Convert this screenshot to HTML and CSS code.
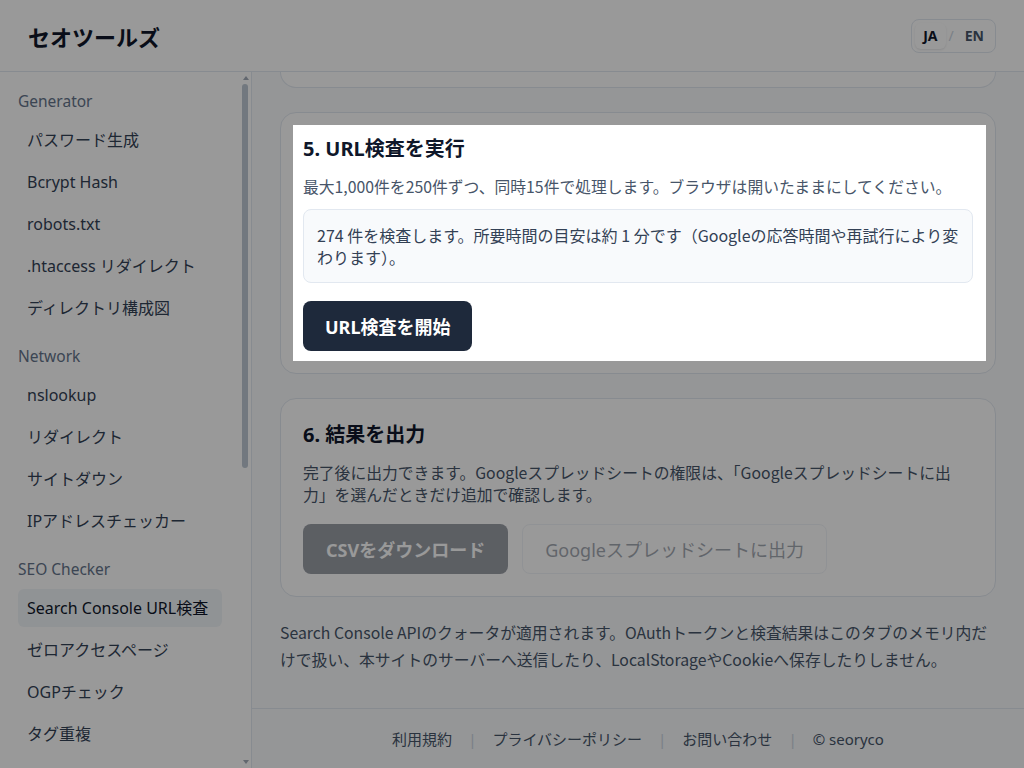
FILE: index.html
```html
<!DOCTYPE html>
<html lang="ja">
<head>
  <meta charset="utf-8" />
  <meta name="viewport" content="width=device-width, initial-scale=1" />
  <title>Search Console URL検査 | セオツールズ</title>
  <link rel="stylesheet" href="styles.css">
</head>
<body>

  <header class="topbar">
    <div class="brand">セオツールズ</div>
    <div class="lang">
      <span class="lang-item active">JA</span>
      <span class="lang-sep">/</span>
      <span class="lang-item">EN</span>
    </div>
  </header>

  <!-- Sidebar -->
  <aside class="sidebar">
    <nav class="sidebar-inner">
      <div class="group">
        <div class="group-label">Generator</div>
        <ul class="nav">
          <li><a href="#">パスワード生成</a></li>
          <li><a href="#">Bcrypt Hash</a></li>
          <li><a href="#">robots.txt</a></li>
          <li><a href="#">.htaccess リダイレクト</a></li>
          <li><a href="#">ディレクトリ構成図</a></li>
        </ul>
      </div>
      <div class="group">
        <div class="group-label">Network</div>
        <ul class="nav">
          <li><a href="#">nslookup</a></li>
          <li><a href="#">リダイレクト</a></li>
          <li><a href="#">サイトダウン</a></li>
          <li><a href="#">IPアドレスチェッカー</a></li>
        </ul>
      </div>
      <div class="group">
        <div class="group-label">SEO Checker</div>
        <ul class="nav">
          <li><a href="#" class="active">Search Console URL検査</a></li>
          <li><a href="#">ゼロアクセスページ</a></li>
          <li><a href="#">OGPチェック</a></li>
          <li><a href="#">タグ重複</a></li>
        </ul>
      </div>
    </nav>
    <!-- スクロールバー -->
    <div class="scrollbar">
      <span class="sb-arrow up"></span>
      <span class="sb-thumb"></span>
      <span class="sb-arrow down"></span>
    </div>
  </aside>

  <main class="main">
    <div class="content">
      <!-- 4. (スクロール済み) -->
      <section class="card card-stub"></section>

      <!-- 5. URL検査 -->
      <section class="card">
        <div class="tour-spot">
          <h2>5. URL検査を実行</h2>
          <p class="desc">最大1,000件を250件ずつ、同時15件で処理します。ブラウザは開いたままにしてください。</p>
          <div class="info">274 件を検査します。所要時間の目安は約 1 分です（Googleの応答時間や再試行により変わります）。</div>
          <button class="btn btn-dark btn-start">URL検査を開始</button>
        </div>
      </section>

      <!-- 6. 結果 -->
      <section class="card">
        <h2>6. 結果を出力</h2>
        <p class="desc">完了後に出力できます。Googleスプレッドシートの権限は、「Googleスプレッドシートに出力」を選んだときだけ追加で確認します。</p>
        <div class="actions">
          <button class="btn btn-dark" disabled>CSVをダウンロード</button>
          <button class="btn btn-outline" disabled>Googleスプレッドシートに出力</button>
        </div>
      </section>

      <p class="note">Search Console APIのクォータが適用されます。OAuthトークンと検査結果はこのタブのメモリ内だけで扱い、本サイトのサーバーへ送信したり、LocalStorageやCookieへ保存したりしません。</p>
    </div>

    <footer class="footer">
      <a href="#">利用規約</a><span class="sep">|</span>
      <a href="#">プライバシーポリシー</a><span class="sep">|</span>
      <a href="#">お問い合わせ</a><span class="sep">|</span>
      <span>© seoryco</span>
    </footer>
  </main>

</body>
</html>
```

FILE: styles.css
```css
html, body { height: 100%; }
body {
    margin: 0;
    font-family: "Noto Sans", "Noto Sans CJK JP", sans-serif;
    color: #0f172a;
    background: #fff;
    overflow: hidden;
    display: grid;
    grid-template-columns: 252px 1fr;
    grid-template-rows: 72px 1fr;
}
a { text-decoration: none; color: inherit; }

/* --- header --- */
.topbar {
    grid-column: 1 / -1;
    display: flex;
    align-items: center;
    justify-content: space-between;
    padding: 0 28px;
    border-bottom: 1px solid #e2e8f0;
    background: #fff;
}
.brand { font-size: 22px; font-weight: 700; color: #0f172a; }
.lang {
    display: flex; align-items: center; gap: 3px;
    border: 1px solid #e2e8f0; border-radius: 8px;
    padding: 3px; font-size: 14px; font-weight: 700;
}
.lang-item { padding: 0 8px; line-height: 26px; border-radius: 6px; color: #475569; }
.lang-item.active { background: #fff; color: #0f172a; box-shadow: 0 1px 2px rgba(15, 23, 42, .1); }
.lang-sep { color: #cbd5e1; font-weight: 400; }

/* --- sidebar --- */
.sidebar {
    position: relative;
    border-right: 1px solid #e2e8f0;
    overflow: hidden;
    min-height: 0;
}
.sidebar-inner { padding: 17px 29px 17px 18px; }
.scrollbar {
    position: absolute; top: 0; right: 0; bottom: 0;
    width: 11px;
    display: flex; flex-direction: column; align-items: center;
}
.sb-arrow { width: 0; height: 0; border-left: 3.5px solid transparent; border-right: 3.5px solid transparent; margin: 4px 0; }
.sb-arrow.up { border-bottom: 4px solid #a3acb9; }
.sb-arrow.down { border-top: 4px solid #a3acb9; margin-top: auto; }
.sb-thumb { width: 6px; height: 384px; margin: 0 0 0 -1px; border-radius: 3px; background: #bfc8d4; }

.group + .group { margin-top: 17px; }
.group-label { font-size: 15.5px; line-height: 24px; color: #64748b; margin-bottom: 8px; }
.nav { list-style: none; margin: 0; padding: 0; display: flex; flex-direction: column; gap: 4px; }
.nav a {
    display: block; height: 38px; line-height: 38px;
    padding: 0 9px; border-radius: 6px;
    font-size: 16px; color: #334155; white-space: nowrap;
}
.nav a.active { background: #f1f5f9; color: #0f172a; }

/* --- main --- */
.main {
    background: #f8fafc;
    display: flex; flex-direction: column;
    min-height: 0;
}
.content { padding: 0 28px; display: flex; flex-direction: column; gap: 24px; }
.card {
    background: #fff;
    border: 1px solid #e2e8f0;
    border-radius: 16px;
    padding: 22px;
}
.card-stub { height: 15px; padding: 0; border-top: none; border-radius: 0 0 16px 16px; }
.card h2 { margin: 0 0 13px; font-size: 20px; line-height: 28px; font-weight: 700; color: #0f172a; }
.desc, .info, .note { font-family: "Noto Sans CJK JP", "Noto Sans", sans-serif; font-size: 15.8px; }
.desc { margin: 0; line-height: 22px; color: #475569; }
.info {
    margin-top: 11px; font-size: 16px;
    background: #f8fafc; border: 1px solid #e2e8f0; border-radius: 8px;
    padding: 14px 13px; line-height: 22px; color: #334155;
}
.btn {
    font-family: inherit; font-size: 18px; font-weight: 700;
    height: 50px; padding: 0 22px; border-radius: 8px;
    border: 1px solid transparent; cursor: pointer;
}
.btn-dark { background: #1e293b; color: #fff; }
.btn-outline { background: #fff; border-color: #e2e8f0; color: #334155; font-weight: 400; }
.btn:disabled { opacity: .45; cursor: default; }
.btn-start { margin-top: 18px; padding: 0 21px; }
.actions { margin-top: 18px; display: flex; gap: 14px; }
.note { margin: -2px 0 0; line-height: 27px; color: #475569; }

.footer {
    margin-top: auto;
    height: 59px;
    border-top: 1px solid #e2e8f0;
    display: flex; align-items: center; justify-content: center;
    font-size: 15px; color: #475569;
}
.sep { color: #cbd5e1; margin: 0 16px; }

/* --- tour spotlight --- */
.tour-spot {
    position: relative; z-index: 50;
    background: #fff;
    margin: -10px -13px -10px -10px;
    padding: 10px 13px 10px 10px;
    box-shadow: 0 0 0 2000px rgba(0, 0, 0, .4);
}
```
